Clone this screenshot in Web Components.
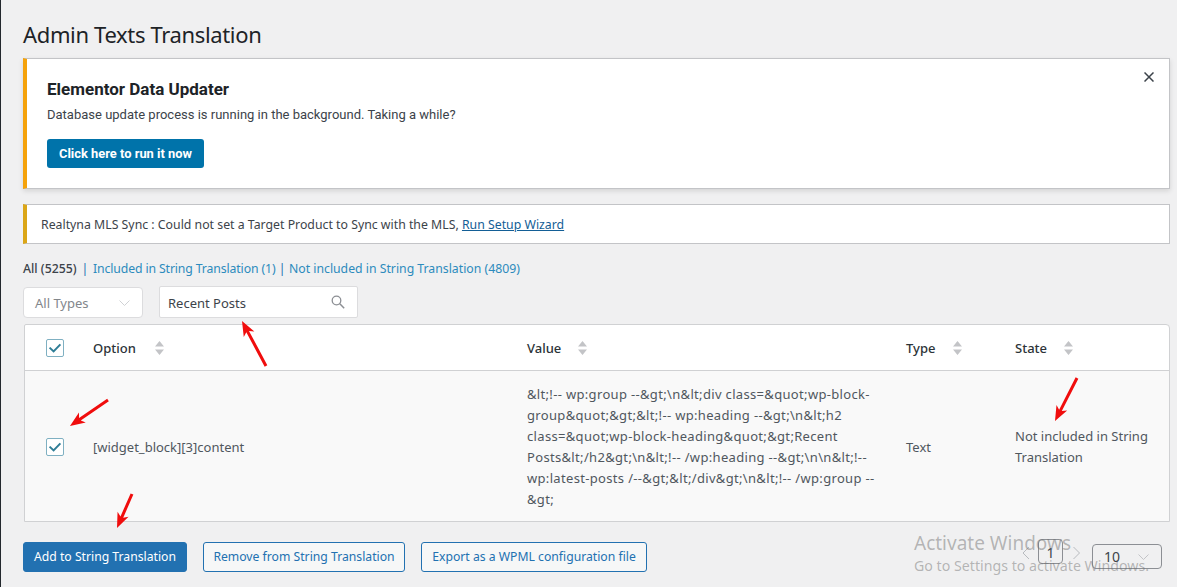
<!DOCTYPE html>
<html>
<head>
<meta charset="utf-8">
<style>
  html, body { margin: 0; height: 100%; }
  body {
    box-sizing: border-box;
    height: 587px;
    overflow: hidden;
    background: #f0f0f1;
    border-left: 1px solid #23282d;
    font-family: "Noto Sans", "Open Sans", sans-serif;
    color: #3c434a;
    position: relative;
  }
</style>
</head>
<body>
<admin-page></admin-page>

<script>
// plain helper, every element keeps its css next to its markup
function define(name, css, html, setup) {
  customElements.define(name, class extends HTMLElement {
    constructor() {
      super();
      this.root = this.attachShadow({ mode: 'open' });
      this.root.innerHTML = `<style>${css}</style>${html}`;
    }
    connectedCallback() {
      if (setup) setup(this);
    }
  });
}

define('elementor-notice', `
  :host {
    display: block;
    box-sizing: border-box;
    height: 131px;
    background: #fff;
    border: 1px solid #c3c4c7;
    border-left: 4px solid #f5a20a;
    box-shadow: 0 2px 5px rgba(0,0,0,.12);
    padding: 21px 20px 0 20px;
    position: relative;
    font-family: Roboto, sans-serif;
  }
  h3 { margin: 0; font-size: 17px; line-height: 19px; font-weight: 700; color: #1d2327; }
  p { margin: 7px 0 15px; font-size: 13px; line-height: 18px; color: #3c434a; }
  a {
    display: inline-block;
    box-sizing: border-box;
    height: 29px;
    line-height: 30px;
    padding: 0 12px;
    background: #0073aa;
    color: #fff;
    border-radius: 3px;
    font-size: 12.9px;
    font-weight: 700;
  }
  svg { position: absolute; top: 13px; right: 15px; }
`, `
  <h3>Elementor Data Updater</h3>
  <p>Database update process is running in the background. Taking a while?</p>
  <a>Click here to run it now</a>
  <svg width="10" height="10" viewBox="0 0 10 10"><path d="M.5.5l9 9M9.5.5l-9 9" stroke="#3c434a" stroke-width="1.5" fill="none"/></svg>
`);

define('sync-notice', `
  :host {
    display: block;
    box-sizing: border-box;
    height: 40px;
    margin-top: 15px;
    background: #fff;
    border: 1px solid #c3c4c7;
    border-left: 4px solid #dba617;
    padding: 0 14px;
    line-height: 40px;
    font-size: 12.3px;
    color: #3c434a;
  }
  a { color: #135e96; text-decoration: underline; }
`, `Realtyna MLS Sync : Could not set a Target Product to Sync with the MLS, <a>Run Setup Wizard</a>`);

define('filter-links', `
  :host {
    display: block;
    margin-top: 16px;
    font-size: 12.25px;
    line-height: 18px;
    color: #2271b1;
  }
  b { font-weight: 500; color: #3c434a; }
  a { color: #2c8bbd; }
  a.tight { letter-spacing: -.12px; }
  i { font-style: normal; margin: 0 1.7px; }
  i.tight { margin: 0 .2px; }
`, `<b>All (5255)</b> <i>|</i> <a class="tight">Included in String Translation (1)</a> <i class="tight">|</i> <a>Not included in String Translation (4809)</a>`);

define('filter-bar', `
  :host { display: flex; align-items: flex-start; gap: 16px; margin-top: 8px; }
  .types, .search {
    box-sizing: border-box;
    background: #fff;
    border: 1px solid #dcdcde;
    display: flex;
    align-items: center;
    justify-content: space-between;
    font-size: 13px;
  }
  .types { width: 120px; height: 31px; margin-top: 1px; border-radius: 4px; padding: 0 12px 0 11px; color: #82868b; }
  .search { width: 199px; height: 32px; border-radius: 2px; padding: 0 12px 0 8px; color: #3c434a; }
  .search span { padding-top: 2px; }
`, `
  <div class="types">All Types
    <svg width="11" height="6" viewBox="0 0 11 6"><path d="M.5.5l5 5 5-5" stroke="#d0d2d5" fill="none"/></svg>
  </div>
  <div class="search"><span>Recent Posts</span>
    <svg width="14" height="14" viewBox="0 0 14 14"><circle cx="5.5" cy="5.5" r="4.3" stroke="#8c8f94" stroke-width="1.3" fill="none"/><path d="M8.8 8.8l4.4 4.4" stroke="#8c8f94" stroke-width="1.5"/></svg>
  </div>
`);

define('check-box', `
  :host {
    display: block;
    box-sizing: border-box;
    width: 18px;
    height: 18px;
    background: #fff;
    border: 1px solid #7fb0c2;
    border-radius: 2px;
  }
  svg { display: block; }
`, `<svg width="16" height="16" viewBox="0 0 16 16"><path d="M2.6 7.6l4 3.8 6.8-7" stroke="#2e7d96" stroke-width="2" fill="none"/></svg>`);

define('sort-label', `
  :host { display: flex; align-items: center; gap: 0; font-size: 13px; font-weight: 500; color: #2c3338; }
  svg { margin-left: var(--sort-gap, 18px); }
`, `<slot></slot><svg width="9" height="14" viewBox="0 0 9 14"><path d="M4.5 0L9 5.5H0zM4.5 14L0 8.5h9z" fill="#c3c4c7"/></svg>`);

define('strings-table', `
  :host {
    display: block;
    box-sizing: border-box;
    margin: 6px 0 0 1px;
    background: #fff;
    border: 1px solid #d0d1d3;
    border-radius: 2px 4px 0 0;
  }
  .row {
    display: grid;
    grid-template-columns: 21px 47px 434px 379px 109px 1fr;
    align-items: center;
    box-sizing: border-box;
  }
  .head { height: 46px; border-bottom: 1px solid #d0d1d3; }
  .body {
    height: 150px;
    padding-top: 2px;
    background: #f9f9f9;
    font-size: 13px;
    line-height: 21px;
    color: #50575e;
  }
  .body .value { letter-spacing: .33px; white-space: nowrap; }
  .body .state { padding-right: 10px; }
  .check { grid-column: 2; }
  .first { grid-column: 3; }
`, `
  <div class="row head">
    <check-box class="check"></check-box>
    <sort-label class="first" style="--sort-gap:19px">Option</sort-label>
    <sort-label style="--sort-gap:17px">Value</sort-label>
    <sort-label>Type</sort-label>
    <sort-label style="--sort-gap:17px">State</sort-label>
  </div>
  <div class="row body">
    <check-box class="check"></check-box>
    <div class="first">[widget_block][3]content</div>
    <div class="value">&amp;lt;!-- wp:group --&amp;gt;\\n&amp;lt;div class=&amp;quot;wp-block-<br>group&amp;quot;&amp;gt;&amp;lt;!-- wp:heading --&amp;gt;\\n&amp;lt;h2<br>class=&amp;quot;wp-block-heading&amp;quot;&amp;gt;Recent<br>Posts&amp;lt;/h2&amp;gt;\\n&amp;lt;!-- /wp:heading --&amp;gt;\\n\\n&amp;lt;!--<br>wp:latest-posts /--&amp;gt;&amp;lt;/div&amp;gt;\\n&amp;lt;!-- /wp:group --<br>&amp;gt;</div>
    <div>Text</div>
    <div class="state">Not included in String<br>Translation</div>
  </div>
`);

define('action-bar', `
  :host { display: flex; align-items: flex-start; justify-content: space-between; margin-top: 17px; }
  .buttons { display: flex; gap: 16px; margin-top: 3px; }
  button {
    box-sizing: border-box;
    height: 30px;
    padding: 0 0 1px;
    font: 12.2px "Noto Sans", sans-serif;
    color: #2271b1;
    background: #f6f7f7;
    border: 1px solid #2271b1;
    border-radius: 3px;
  }
  button.primary { background: #2271b1; color: #fff; }
  .pager { display: flex; align-items: flex-start; margin-right: 8px; font-size: 14px; color: #3c434a; }
  .arrow { margin-top: 7px; }
  .page, .size {
    box-sizing: border-box;
    border: 1px solid #8c8f94;
    border-radius: 4px;
  }
  .page { width: 25px; height: 25px; text-align: center; line-height: 25px; }
  .size {
    width: 70px; height: 25px; margin-top: 5px;
    padding: 0 12px 0 11px; line-height: 23px;
    display: flex; justify-content: space-between; align-items: center;
  }
`, `
  <div class="buttons">
    <button class="primary" style="width:164px">Add to String Translation</button>
    <button style="width:202px">Remove from String Translation</button>
    <button style="width:226px">Export as a WPML configuration file</button>
  </div>
  <div class="pager">
    <svg class="arrow" width="16" height="14" viewBox="0 0 16 14"><path d="M7 1L1 7l6 6" stroke="#b8bbbf" fill="none"/></svg>
    <div class="page">1</div>
    <svg class="arrow" width="29" height="14" viewBox="0 0 29 14"><path d="M10.5 1l6 6-6 6" stroke="#b8bbbf" fill="none"/></svg>
    <div class="size">10
      <svg width="11" height="6" viewBox="0 0 11 6"><path d="M.5.5l5 5 5-5" stroke="#c3c4c7" fill="none"/></svg>
    </div>
  </div>
`);

// annotation drawn on top of the screenshot, tip and tail are the content here
define('red-arrow', `
  :host { position: absolute; left: 0; top: 0; pointer-events: none; }
  svg { display: block; overflow: visible; }
`, `<svg width="1" height="1"><path fill="#f00d0d"/></svg>`, (el) => {
  const [x1, y1, x2, y2] = ['x1', 'y1', 'x2', 'y2'].map(a => +el.getAttribute(a));
  const len = Math.hypot(x2 - x1, y2 - y1);
  const ux = (x2 - x1) / len, uy = (y2 - y1) / len;
  const at = (along, side) => `${x1 + ux * along - uy * side} ${y1 + uy * along + ux * side}`;
  const head = len - 15;
  el.root.querySelector('path').setAttribute('d',
    `M${at(0, -1.5)}L${at(head + 3, -1.5)}L${at(head, -6)}L${at(len, 0)}L${at(head, 6)}L${at(head + 3, 1.5)}L${at(0, 1.5)}Z`);
});

define('activation-mark', `
  :host {
    position: absolute;
    left: 913px;
    top: 530px;
    pointer-events: none;
    color: rgba(105,105,105,.45);
    font-family: "Noto Sans", sans-serif;
    white-space: nowrap;
  }
  div { font-size: 19px; line-height: 26px; }
  small { display: block; font-size: 14.2px; line-height: 20px; }
`, `<div>Activate Windows</div><small>Go to Settings to activate Windows.</small>`);

define('admin-page', `
  :host { display: block; padding: 20px 7px 0 22px; }
  h1 { margin: 0 0 10px; font-size: 22px; line-height: 28px; font-weight: 400; letter-spacing: -.35px; color: #1d2327; }
`, `
  <h1>Admin Texts Translation</h1>
  <elementor-notice></elementor-notice>
  <sync-notice></sync-notice>
  <filter-links></filter-links>
  <filter-bar></filter-bar>
  <strings-table></strings-table>
  <action-bar></action-bar>
  <red-arrow x1="265" y1="366" x2="241" y2="321"></red-arrow>
  <red-arrow x1="107" y1="400" x2="69" y2="426"></red-arrow>
  <red-arrow x1="131" y1="494" x2="116" y2="528"></red-arrow>
  <red-arrow x1="1076" y1="378" x2="1054" y2="421"></red-arrow>
  <activation-mark></activation-mark>
`);
</script>
</body>
</html>
